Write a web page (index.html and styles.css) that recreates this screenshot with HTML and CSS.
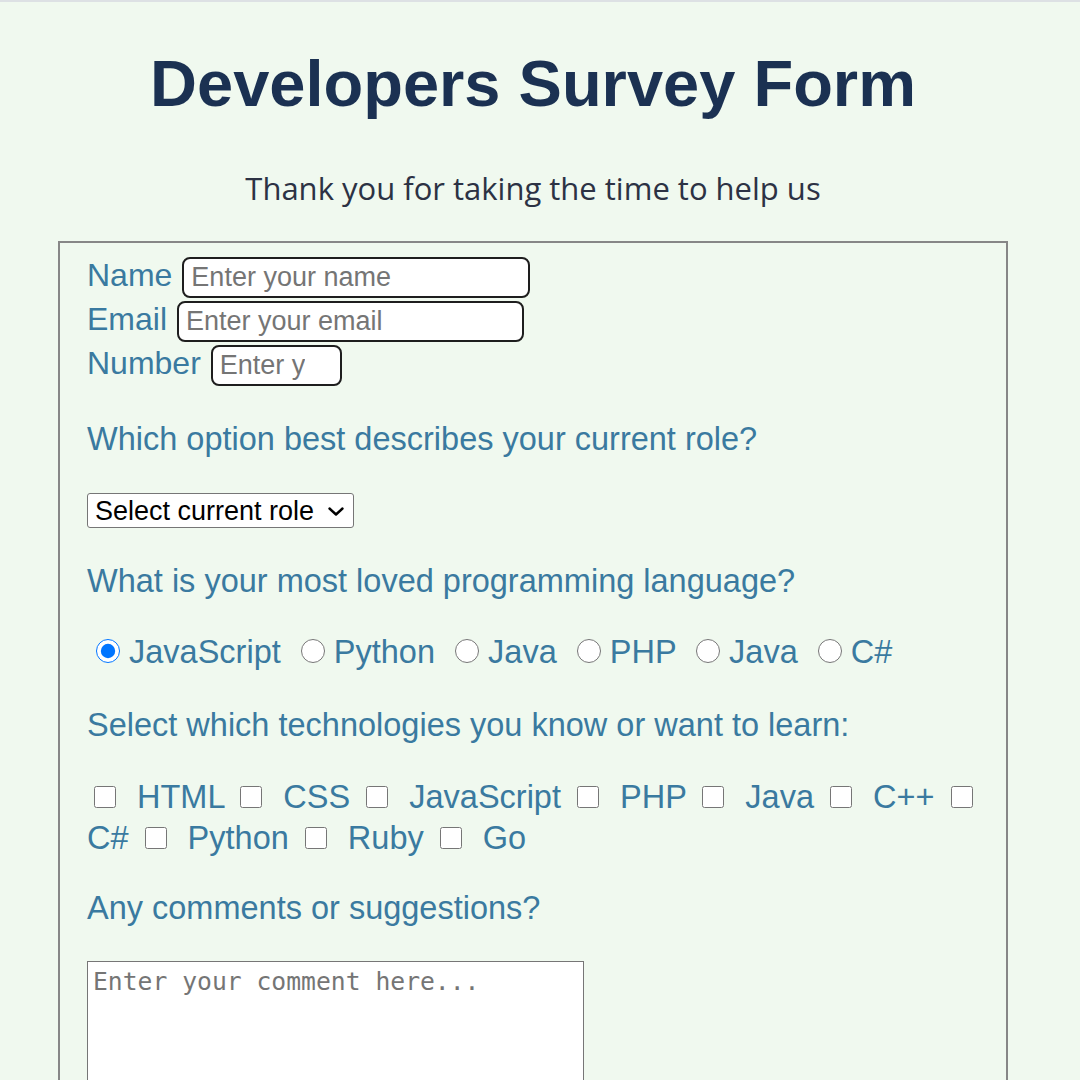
FILE: index.html
```html
<!DOCTYPE html>
<html lang="en">
<head>
<meta charset="utf-8">
<title>Developers Survey Form</title>
<link rel="stylesheet" href="styles.css">
</head>
<body>
<main class="page">
  <h1 class="title">Developers Survey Form</h1>
  <p class="subtitle">Thank you for taking the time to help us</p>
  <form class="survey">
    <div class="field"><label class="lbl" for="name">Name</label><input id="name" class="text-in name-in" type="text" placeholder="Enter your name"></div>
    <div class="field"><label class="lbl" for="email">Email</label><input id="email" class="text-in email-in" type="email" placeholder="Enter your email"></div>
    <div class="field"><label class="lbl" for="number">Number</label><input id="number" class="text-in number-in" type="text" inputmode="numeric" placeholder="Enter your age"></div>

    <p class="question q-role">Which option best describes your current role?</p>
    <div class="role-wrap">
      <select class="role"><option>Select current role</option><option>Student</option><option>Full Stack Developer</option></select>
      <svg class="chev" width="16" height="9" viewBox="0 0 16 9" aria-hidden="true"><path d="M1.5 1.5 L8 7.5 L14.5 1.5" fill="none" stroke="#000" stroke-width="2.4" stroke-linecap="round" stroke-linejoin="round"/></svg>
    </div>

    <p class="question q-lang">What is your most loved programming language?</p>
    <div class="radios"><input class="radio" type="radio" name="lang" id="r1" checked> <label for="r1">JavaScript</label> <input class="radio" type="radio" name="lang" id="r2"> <label for="r2">Python</label> <input class="radio" type="radio" name="lang" id="r3"> <label for="r3">Java</label> <input class="radio" type="radio" name="lang" id="r4"> <label for="r4">PHP</label> <input class="radio" type="radio" name="lang" id="r5"> <label for="r5">Java</label> <input class="radio" type="radio" name="lang" id="r6"> <label for="r6">C#</label></div>

    <p class="question q-tech">Select which technologies you know or want to learn:</p>
    <div class="checks"><input class="check" type="checkbox" id="c1"> <label for="c1">HTML</label> <input class="check" type="checkbox" id="c2"> <label for="c2">CSS</label> <input class="check" type="checkbox" id="c3"> <label for="c3">JavaScript</label> <input class="check" type="checkbox" id="c4"> <label for="c4">PHP</label> <input class="check" type="checkbox" id="c5"> <label for="c5">Java</label> <input class="check" type="checkbox" id="c6"> <label for="c6">C++</label> <input class="check" type="checkbox" id="c7"> <label for="c7">C#</label> <input class="check" type="checkbox" id="c8"> <label for="c8">Python</label> <input class="check" type="checkbox" id="c9"> <label for="c9">Ruby</label> <input class="check" type="checkbox" id="c10"> <label for="c10">Go</label></div>

    <p class="question q-comment">Any comments or suggestions?</p>
    <textarea class="comment" placeholder="Enter your comment here..."></textarea>
  </form>
</main>
</body>
</html>
```
FILE: styles.css
```css
html, body {
  margin: 0;
  padding: 0;
}
body {
  background: #f0f9ef;
  border-top: 2px solid #dde1e4;
  font-family: "Liberation Sans", Arial, sans-serif;
}
.page {
  width: 1066px;
}
.title {
  margin: 44px 0 0;
  text-align: center;
  font-family: "Liberation Sans", Arial, sans-serif;
  font-weight: bold;
  font-size: 65px;
  line-height: 76px;
  color: #1b3152;
}
.subtitle {
  margin: 47px 0 0;
  text-align: center;
  font-family: "Open Sans", "Noto Sans", sans-serif;
  font-size: 31px;
  line-height: 38px;
  color: #2c3244;
}
.survey {
  width: 950px;
  box-sizing: border-box;
  margin: 34px auto 0;
  border: 2px solid #878787;
  padding: 14px 15px 40px 27px;
  color: #3a7aa0;
  font-size: 32.5px;
}
.field {
  display: flex;
  align-items: baseline;
  gap: 10px;
  margin-bottom: 3px;
}
.lbl {
  font-size: 32px;
  line-height: 37px;
}
.text-in {
  box-sizing: border-box;
  height: 41px;
  border: 2px solid #1e1e1e;
  border-radius: 8px;
  background: #fff;
  padding: 0 7px;
  font-family: "Liberation Sans", Arial, sans-serif;
  font-size: 27px;
  color: #222;
  outline: none;
}
.text-in::placeholder {
  color: #757575;
}
.name-in { width: 348px; }
.email-in { width: 347px; }
.number-in { width: 131px; padding-right: 35px; }
.question {
  margin: 0;
  font-size: 32.5px;
  line-height: 37px;
}
.q-role { margin-top: 35px; }
.role-wrap {
  position: relative;
  width: 267px;
  margin-top: 35px;
}
.role {
  display: block;
  box-sizing: border-box;
  width: 100%;
  height: 35px;
  border: 1px solid #767676;
  border-radius: 3px;
  background: #fff;
  padding: 0 30px 0 7px;
  font-family: "Liberation Sans", Arial, sans-serif;
  font-size: 27px;
  color: #000;
  -webkit-appearance: none;
  appearance: none;
}
.chev {
  position: absolute;
  right: 10px;
  top: 14px;
  pointer-events: none;
}
.q-lang { margin-top: 35px; }
.radios {
  margin-top: 32px;
  line-height: 41px;
}
.radio {
  width: 24px;
  height: 24px;
  margin: 0 0 0 11px;
  vertical-align: baseline;
}
.radio:first-child { margin-left: 9px; }
.q-tech { margin-top: 34px; }
.checks {
  margin-top: 33px;
  line-height: 41px;
}
.check {
  width: 22px;
  height: 22px;
  margin: 0 12px 0 7px;
  vertical-align: baseline;
}
.q-comment { margin-top: 31px; }
.comment {
  display: block;
  margin-top: 34px;
  box-sizing: border-box;
  width: 497px;
  height: 220px;
  border: 1px solid #767676;
  border-radius: 0;
  background: #fff;
  padding: 5px;
  font-family: "DejaVu Sans Mono", monospace;
  font-size: 24.7px;
  resize: vertical;
}
.comment::placeholder {
  color: #757575;
}
```
